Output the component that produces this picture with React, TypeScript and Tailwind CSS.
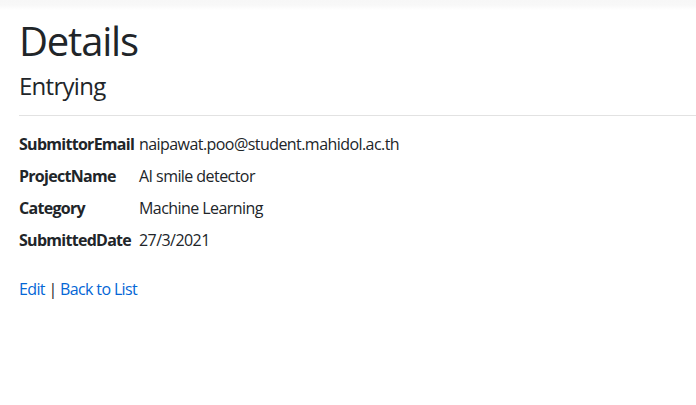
import React from "react";

const rows: [string, string][] = [
  ["SubmittorEmail", "naipawat.poo@student.mahidol.ac.th"],
  ["ProjectName", "AI smile detector"],
  ["Category", "Machine Learning"],
  ["SubmittedDate", "27/3/2021"],
];

export default function App() {
  return (
    <div
      className="w-[696px] h-[405px] bg-white text-[#212529] overflow-hidden"
      style={{ fontFamily: '"Open Sans", "Noto Sans", sans-serif' }}
    >
      <div className="h-[10px] bg-gradient-to-b from-[#f7f7f7] via-[#f8f8f8] to-white" />
      <div className="pl-[19px]">
        <h1 className="text-[40px] leading-[48px] font-normal mt-[7px] tracking-[-0.03em]">Details</h1>
        <div>
          <h4 className="text-[24px] leading-[29px] font-normal mt-[6px] mb-[8px] tracking-[-0.03em]">Entrying</h4>
          <hr className="border-0 border-t border-[#e2e2e2] mt-[15px] mb-[16px]" />
          <dl>
            {rows.map(([k, v]) => (
              <div key={k} className="flex text-[16px] leading-[24px] mb-[8px]">
                <dt className="w-[120px] font-bold whitespace-nowrap tracking-[-0.045em]">{k}</dt>
                <dd className="tracking-[-0.035em]">{v}</dd>
              </div>
            ))}
          </dl>
        </div>
        <div className="mt-[25px] text-[16px] leading-[24px] tracking-[-0.04em]">
          <a href="#" className="text-[#0366d6]">Edit</a> |{" "}
          <a href="#" className="text-[#0366d6]">Back to List</a>
        </div>
      </div>
    </div>
  );
}
